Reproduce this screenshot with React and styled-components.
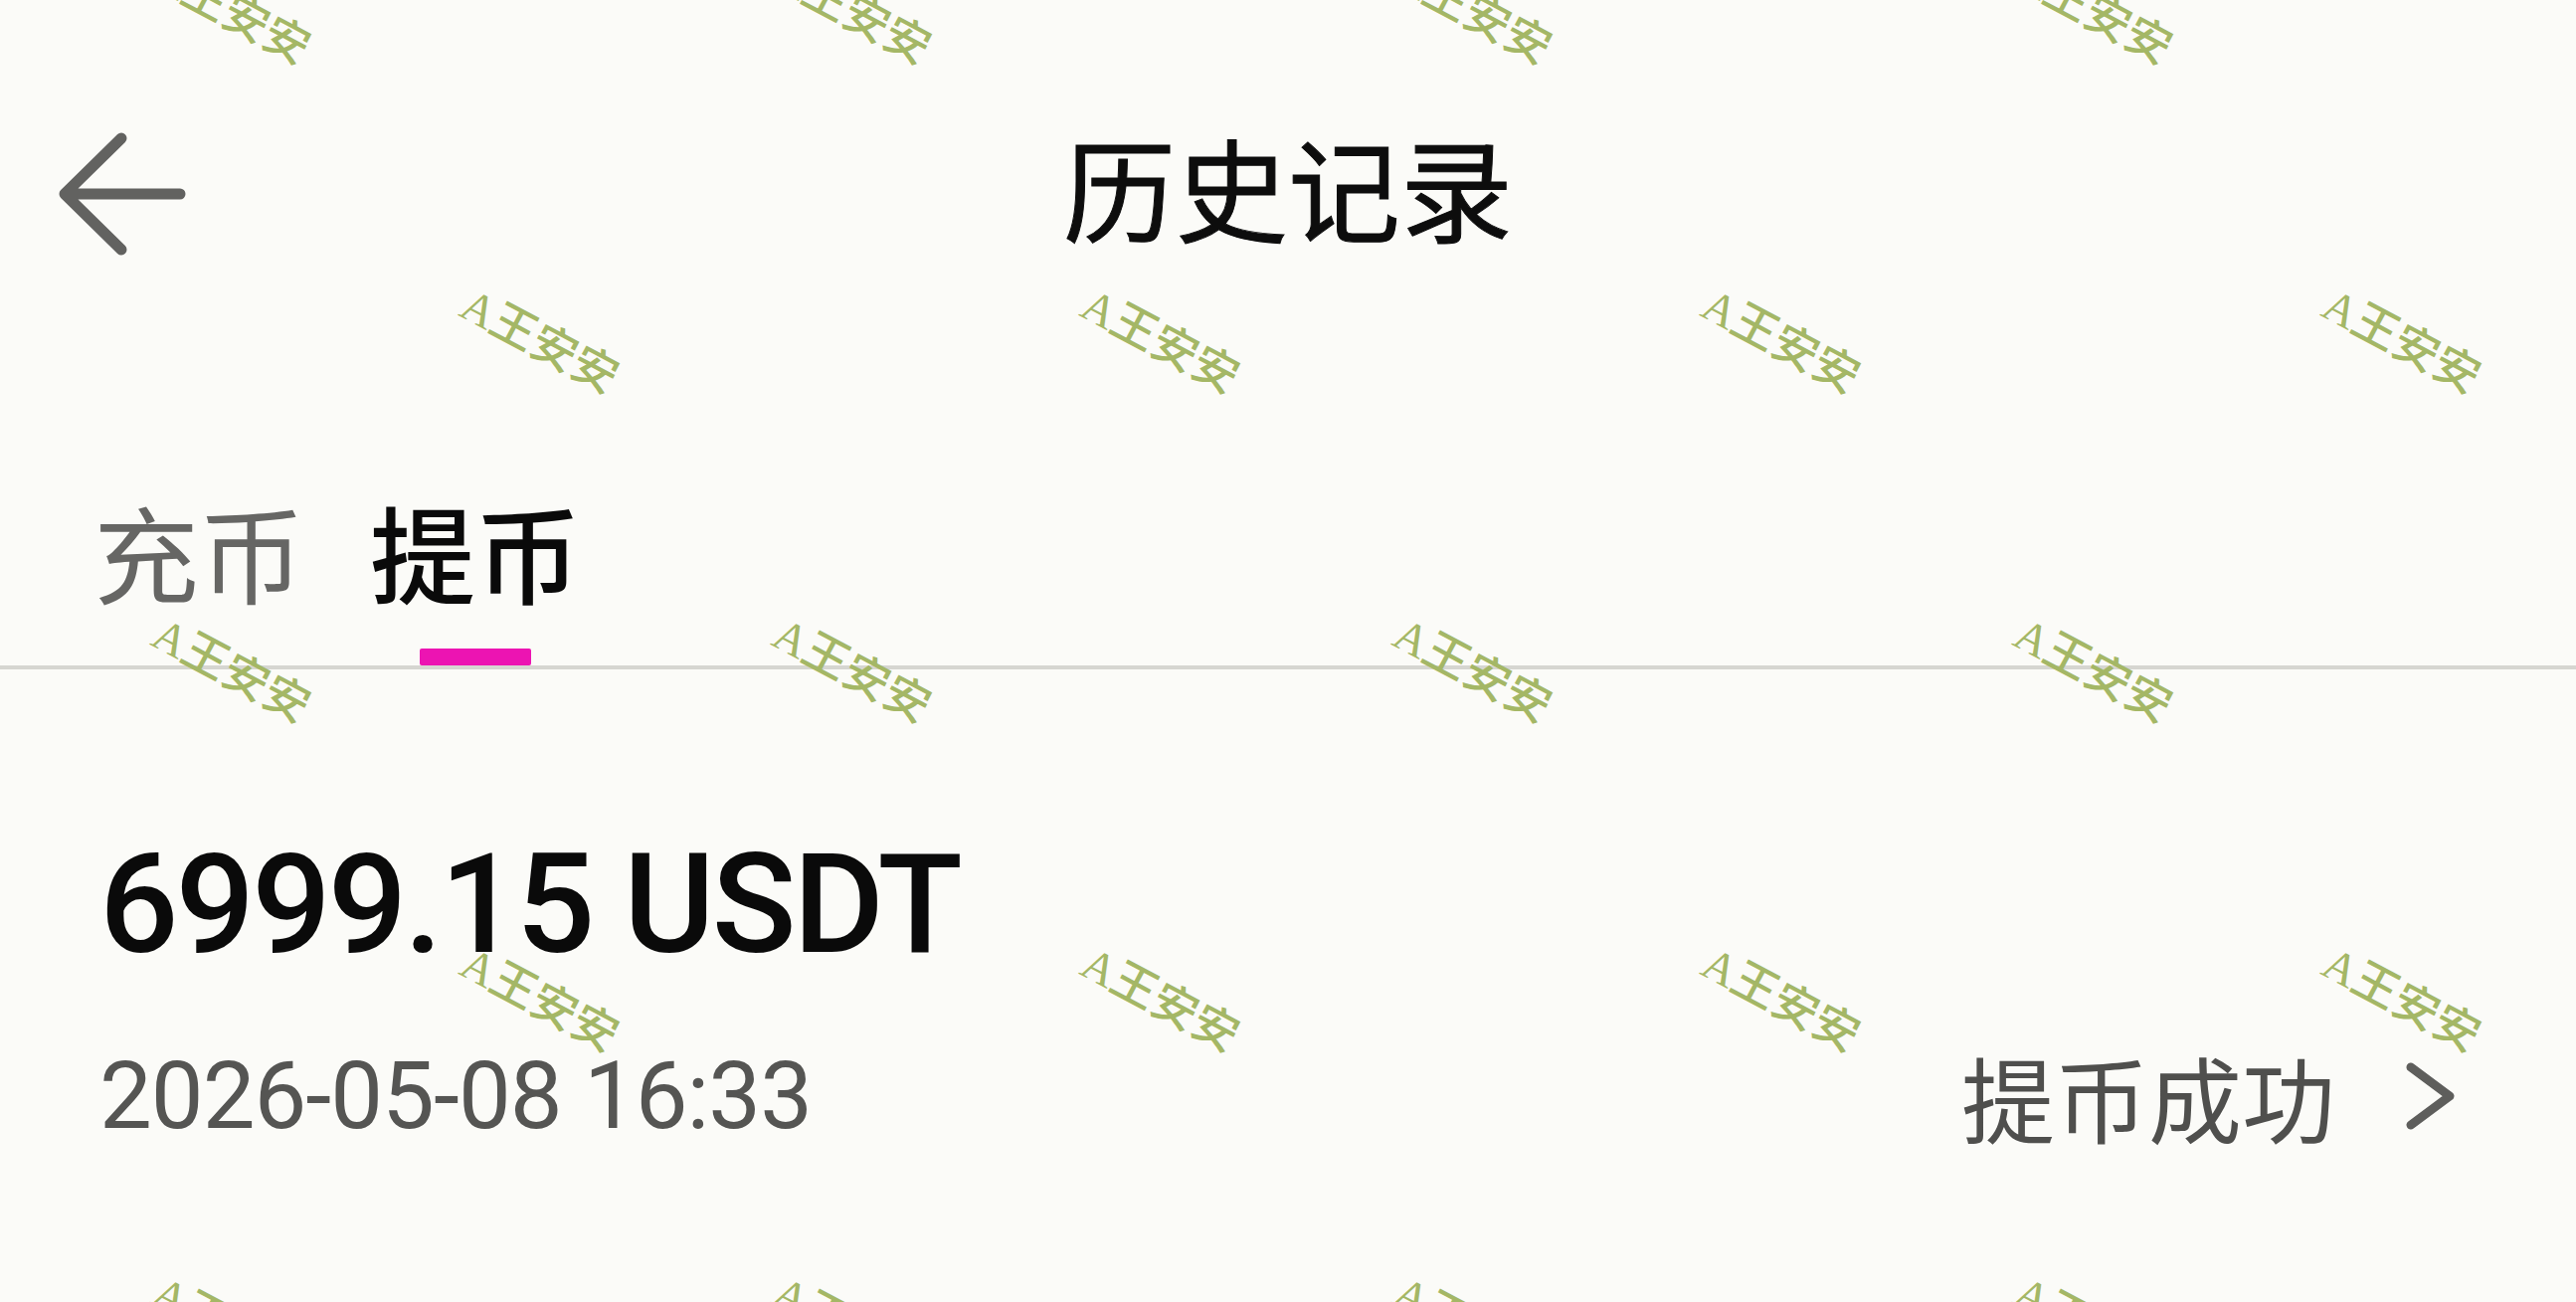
import React from "react";
import styled, { createGlobalStyle } from "styled-components";

const GlobalStyle = createGlobalStyle`
  html, body {
    margin: 0;
    padding: 0;
    background: #fbfbf8;
  }
  body {
    font-family: "Noto Sans CJK SC", "Noto Sans", sans-serif;
    color: #111;
  }
`;

const Page = styled.div`
  position: relative;
  min-height: 100vh;
  overflow: hidden;
  background: #fbfbf8;
`;

const Header = styled.div`
  height: 396px;
  display: grid;
  grid-template-columns: 1fr auto 1fr;
  align-items: center;
  padding: 0 59px;
`;

const BackButton = styled.div`
  display: flex;
  align-items: center;
  margin-top: -6px;
  cursor: pointer;
`;

const Title = styled.h1`
  margin: 0 0 24px;
  font-size: 113px;
  line-height: 1;
  font-weight: 400;
  color: #0d0d0d;
  -webkit-text-stroke: 1px #0d0d0d;
`;

const Tabs = styled.div`
  display: flex;
  gap: 66px;
  padding: 104px 0 0 94px;
  border-bottom: 4px solid #d6d6d1;
`;

const Tab = styled.div`
  display: flex;
  flex-direction: column;
  align-items: center;
  cursor: pointer;
`;

const TabLabel = styled.span`
  font-size: 106px;
  line-height: 1;
  font-weight: ${p => (p.active ? 500 : 400)};
  color: ${p => (p.active ? "#0a0a0a" : "#666664")};
`;

const Indicator = styled.div`
  margin-top: 46px;
  width: 112px;
  height: 17px;
  border-radius: 2px;
  background: ${p => (p.active ? "#ec14b2" : "transparent")};
`;

const Record = styled.div`
  display: flex;
  flex-direction: column;
  padding: 166px 120px 0 100px;
`;

const Amount = styled.div`
  font-family: Roboto, "Liberation Sans", sans-serif;
  font-weight: 500;
  font-size: 140px;
  line-height: 1;
  letter-spacing: -3px;
  color: #0a0a0a;
`;

const MetaRow = styled.div`
  display: flex;
  align-items: center;
  justify-content: space-between;
  margin-top: 76px;
`;

const Time = styled.span`
  font-family: Roboto, "Liberation Sans", sans-serif;
  font-size: 94px;
  line-height: 1;
  letter-spacing: -1px;
  color: #555553;
`;

const Status = styled.div`
  display: flex;
  align-items: center;
  gap: 70px;
  font-size: 94px;
  line-height: 1;
  color: #4f4f4d;
  cursor: pointer;
`;

const Watermarks = styled.div`
  position: absolute;
  top: -158px;
  left: -391px;
  display: flex;
  flex-direction: column;
  pointer-events: none;
`;

const MarkRow = styled.div`
  display: flex;
  height: 331px;
  padding-left: ${p => (p.shifted ? "314px" : "0")};
`;

const Mark = styled.div`
  width: 624px;
  height: 331px;
  display: flex;
  align-items: center;
  justify-content: center;
  font-size: 46px;
  font-weight: 500;
  color: #a4b766;
  white-space: nowrap;
  span {
    display: inline-block;
    transform: rotate(28deg);
  }
  em {
    font-style: normal;
    font-family: "Liberation Serif", serif;
    font-weight: 400;
  }
`;

function BackArrow() {
  return (
    <svg width="128" height="124" viewBox="0 0 128 124" fill="none">
      <path
        d="M63 6 L6 62 L63 118 M6 62 H122"
        stroke="#626260"
        strokeWidth="11"
        strokeLinecap="round"
        strokeLinejoin="round"
      />
    </svg>
  );
}

function Chevron() {
  return (
    <svg width="52" height="68" viewBox="0 0 52 68" fill="none">
      <path
        d="M6 5 L45 34 L6 63"
        stroke="#5e5e5c"
        strokeWidth="9"
        strokeLinecap="round"
        strokeLinejoin="round"
      />
    </svg>
  );
}

export default function App() {
  const rows = [0, 1, 2, 3, 4];
  const cols = [0, 1, 2, 3, 4, 5];
  return (
    <Page>
      <GlobalStyle />
      <Header>
        <BackButton>
          <BackArrow />
        </BackButton>
        <Title>历史记录</Title>
        <div />
      </Header>

      <Tabs>
        <Tab>
          <TabLabel>充币</TabLabel>
          <Indicator />
        </Tab>
        <Tab>
          <TabLabel active>提币</TabLabel>
          <Indicator active />
        </Tab>
      </Tabs>

      <Record>
        <Amount>6999.15 USDT</Amount>
        <MetaRow>
          <Time>2026-05-08 16:33</Time>
          <Status>
            提币成功
            <Chevron />
          </Status>
        </MetaRow>
      </Record>

      <Watermarks>
        {rows.map(r => (
          <MarkRow key={r} shifted={r % 2 === 0}>
            {cols.map(c => (
              <Mark key={c}>
                <span>
                  <em>A</em>王安安
                </span>
              </Mark>
            ))}
          </MarkRow>
        ))}
      </Watermarks>
    </Page>
  );
}
